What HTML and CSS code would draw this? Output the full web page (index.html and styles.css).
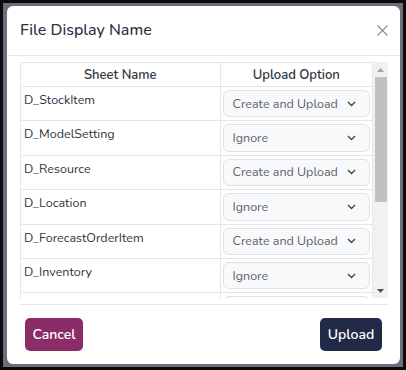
FILE: index.html
```html
<!DOCTYPE html>
<html>
<head>
<meta charset="utf-8">
<link rel="stylesheet" href="styles.css">
</head>
<body>
<div class="backdrop">
  <div class="modal">
    <div class="modal-header">
      <h2 class="modal-title">File Display Name</h2>
      <button class="close" aria-label="Close">
        <svg width="11" height="11" viewBox="0 0 11 11"><path d="M0.5 0.5L10.5 10.5M10.5 0.5L0.5 10.5" stroke="#8a8f98" stroke-width="1.2" fill="none"/></svg>
      </button>
    </div>
    <div class="modal-body">
      <div class="table-frame">
        <div class="table-viewport">
          <table class="sheet-table">
            <thead>
              <tr><th class="col-name">Sheet Name</th><th class="col-opt">Upload Option</th></tr>
            </thead>
            <tbody>
              <tr><td>D_StockItem</td><td><div class="select"><span>Create and Upload</span><svg class="chev" width="9" height="6" viewBox="0 0 9 6"><path d="M1 1l3.5 3.5L8 1" stroke="#444" stroke-width="1.4" fill="none"/></svg></div></td></tr>
              <tr><td>D_ModelSetting</td><td><div class="select"><span>Ignore</span><svg class="chev" width="9" height="6" viewBox="0 0 9 6"><path d="M1 1l3.5 3.5L8 1" stroke="#444" stroke-width="1.4" fill="none"/></svg></div></td></tr>
              <tr><td>D_Resource</td><td><div class="select"><span>Create and Upload</span><svg class="chev" width="9" height="6" viewBox="0 0 9 6"><path d="M1 1l3.5 3.5L8 1" stroke="#444" stroke-width="1.4" fill="none"/></svg></div></td></tr>
              <tr><td>D_Location</td><td><div class="select"><span>Ignore</span><svg class="chev" width="9" height="6" viewBox="0 0 9 6"><path d="M1 1l3.5 3.5L8 1" stroke="#444" stroke-width="1.4" fill="none"/></svg></div></td></tr>
              <tr><td>D_ForecastOrderItem</td><td><div class="select"><span>Create and Upload</span><svg class="chev" width="9" height="6" viewBox="0 0 9 6"><path d="M1 1l3.5 3.5L8 1" stroke="#444" stroke-width="1.4" fill="none"/></svg></div></td></tr>
              <tr><td>D_Inventory</td><td><div class="select"><span>Ignore</span><svg class="chev" width="9" height="6" viewBox="0 0 9 6"><path d="M1 1l3.5 3.5L8 1" stroke="#444" stroke-width="1.4" fill="none"/></svg></div></td></tr>
              <tr><td>D_Supplier</td><td><div class="select"><span>Create and Upload</span><svg class="chev" width="9" height="6" viewBox="0 0 9 6"><path d="M1 1l3.5 3.5L8 1" stroke="#444" stroke-width="1.4" fill="none"/></svg></div></td></tr>
            </tbody>
          </table>
        </div>
        <div class="scrollbar">
          <div class="sb-btn"><svg width="7" height="4" viewBox="0 0 7 4"><path d="M0 4L3.5 0L7 4Z" fill="#a3a3a3"/></svg></div>
          <div class="sb-track"><div class="sb-thumb"></div></div>
          <div class="sb-btn"><svg width="7" height="4" viewBox="0 0 7 4"><path d="M0 0L3.5 4L7 0Z" fill="#505050"/></svg></div>
        </div>
      </div>
    </div>
    <div class="modal-footer">
      <button class="btn btn-cancel">Cancel</button>
      <button class="btn btn-upload">Upload</button>
    </div>
  </div>
</div>
</body>
</html>
```

FILE: styles.css
```css
* { box-sizing: border-box; }
html, body { margin: 0; height: 100%; }
body {
  background: #0c0c0e;
  padding: 3px;
  font-family: "Nunito", "Lato", "Noto Sans", sans-serif;
}
.backdrop {
  height: 100%;
  background: #6c6f79;
  padding: 3px 3px 3px 4px;
}
.modal {
  height: 100%;
  background: #fff;
  border-radius: 6px;
  display: flex;
  flex-direction: column;
}
.modal-header {
  display: flex;
  align-items: center;
  justify-content: space-between;
  padding: 14px 12px 14px 13px;
  border-bottom: 1px solid #e7e9ec;
}
.modal-title {
  margin: 0;
  font-size: 16px;
  line-height: 21px;
  font-weight: 500;
  color: #2a3140;
}
.close {
  border: 0;
  background: none;
  padding: 0;
  width: 11px;
  height: 11px;
  display: flex;
}
.modal-body {
  padding: 6px 12px 6px 13px;
}
.table-frame {
  height: 236px;
  display: flex;
}
.table-viewport {
  flex: 1;
  overflow: hidden;
  border-left: 1px solid #e3e5e8;
}
.scrollbar {
  width: 16px;
  background: #f1f1f1;
  border-left: 1px solid #e8e8e8;
  display: flex;
  flex-direction: column;
}
.sb-btn {
  height: 15px;
  display: flex;
  align-items: center;
  justify-content: center;
}
.sb-track {
  flex: 1;
  padding: 0 1px 0 2px;
}
.sb-thumb {
  height: 125px;
  background: #c1c1c1;
}
.sheet-table {
  width: 100%;
  border-collapse: collapse;
  table-layout: fixed;
  font-size: 12.5px;
  color: #2f3540;
}
.col-name { width: 199px; }
.sheet-table th {
  height: 24px;
  font-weight: 600;
  font-size: 13px;
  text-align: center;
  padding: 0;
  border-top: 1px solid #e3e5e8;
  border-bottom: 1px solid #e3e5e8;
}
.sheet-table th + th, .sheet-table td + td { border-left: 1px solid #e3e5e8; }
.sheet-table td {
  border-bottom: 1px solid #e3e5e8;
  vertical-align: top;
  padding: 3px 2px 3px 2px;
  line-height: 16px;
}
.sheet-table td:first-child { padding: 5px 3px; }
.select {
  height: 27.4px;
  border: 1px solid #dfe2e6;
  border-radius: 6px;
  background: #f8f9fb;
  display: flex;
  align-items: center;
  justify-content: space-between;
  padding: 0 13px 0 9px;
  color: #5b616b;
  font-size: 12.5px;
}
.chev { flex: none; }
.modal-footer {
  margin-top: auto;
  border-top: 1px solid #e7e9ec;
  margin-left: 12px;
  margin-right: 12px;
  padding: 13px 6px 13px 6px;
  display: flex;
  justify-content: space-between;
}
.btn {
  border: 0;
  border-radius: 5px;
  height: 33px;
  color: #fff;
  font-family: inherit;
  font-size: 14px;
  font-weight: 600;
  padding: 0;
  white-space: nowrap;
}
.btn-cancel { background: #8a2d67; width: 58px; }
.btn-upload { background: #212a47; width: 62px; }
```
